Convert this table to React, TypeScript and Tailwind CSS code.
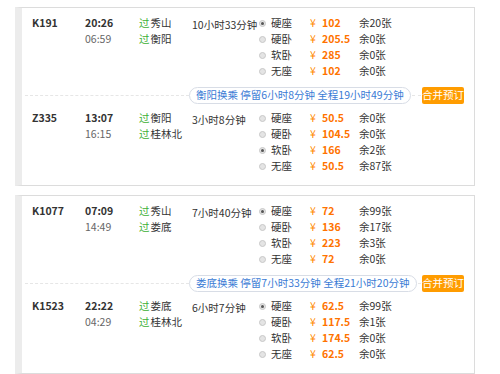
import React from 'react';

type Seat = { name: string; price: string; left: string; checked?: boolean };
type Leg = {
  no: string;
  dep: string;
  arr: string;
  from: string;
  to: string;
  dur: string;
  seats: Seat[];
};
type Trip = { first: Leg; second: Leg; transfer: string };

const trips: Trip[] = [
  {
    transfer: '衡阳换乘 停留6小时8分钟 全程19小时49分钟',
    first: {
      no: 'K191',
      dep: '20:26',
      arr: '06:59',
      from: '秀山',
      to: '衡阳',
      dur: '10小时33分钟',
      seats: [
        { name: '硬座', price: '102', left: '余20张', checked: true },
        { name: '硬卧', price: '205.5', left: '余0张' },
        { name: '软卧', price: '285', left: '余0张' },
        { name: '无座', price: '102', left: '余0张' },
      ],
    },
    second: {
      no: 'Z335',
      dep: '13:07',
      arr: '16:15',
      from: '衡阳',
      to: '桂林北',
      dur: '3小时8分钟',
      seats: [
        { name: '硬座', price: '50.5', left: '余0张' },
        { name: '硬卧', price: '104.5', left: '余0张' },
        { name: '软卧', price: '166', left: '余2张', checked: true },
        { name: '无座', price: '50.5', left: '余87张' },
      ],
    },
  },
  {
    transfer: '娄底换乘 停留7小时33分钟 全程21小时20分钟',
    first: {
      no: 'K1077',
      dep: '07:09',
      arr: '14:49',
      from: '秀山',
      to: '娄底',
      dur: '7小时40分钟',
      seats: [
        { name: '硬座', price: '72', left: '余99张', checked: true },
        { name: '硬卧', price: '136', left: '余17张' },
        { name: '软卧', price: '223', left: '余3张' },
        { name: '无座', price: '72', left: '余0张' },
      ],
    },
    second: {
      no: 'K1523',
      dep: '22:22',
      arr: '04:29',
      from: '娄底',
      to: '桂林北',
      dur: '6小时7分钟',
      seats: [
        { name: '硬座', price: '62.5', left: '余99张', checked: true },
        { name: '硬卧', price: '117.5', left: '余1张' },
        { name: '软卧', price: '174.5', left: '余0张' },
        { name: '无座', price: '62.5', left: '余0张' },
      ],
    },
  },
];

const Radio = ({ checked }: { checked?: boolean }) => (
  <span className="w-[7px] h-[7px] rounded-full border border-[#c8c8c8] bg-[#e4e4e4] flex items-center justify-center">
    {checked && <span className="w-[3px] h-[3px] rounded-full bg-[#555]" />}
  </span>
);

const LegRow = ({ leg }: { leg: Leg }) => (
  <div className="flex text-[10.5px] leading-[16px] text-[#333]">
    <div className="w-[63px] pl-[10px] font-bold">{leg.no}</div>
    <div className="w-[54px]">
      <div className="font-bold">{leg.dep}</div>
      <div className="text-[#666]">{leg.arr}</div>
    </div>
    <div className="w-[53px]">
      <div>
        <span className="text-[#3cb035] mr-[1px]">过</span>
        {leg.from}
      </div>
      <div>
        <span className="text-[#3cb035] mr-[1px]">过</span>
        {leg.to}
      </div>
    </div>
    <div className="w-[67px] pt-[2px] whitespace-nowrap">{leg.dur}</div>
    <div className="flex flex-col">
      {leg.seats.map((s) => (
        <div key={s.name} className="flex items-center h-[16px]">
          <Radio checked={s.checked} />
          <span className="ml-[5px] w-[39px]">{s.name}</span>
          <span className="w-[12px] text-[#ff8a00]">¥</span>
          <span className="w-[37px] font-bold text-[#ff7300]">{s.price}</span>
          <span>{s.left}</span>
        </div>
      ))}
    </div>
  </div>
);

const TripCard = ({ trip }: { trip: Trip }) => (
  <div className="w-[460px] border border-[#dcdcdc] border-l-[7px] border-l-[#ececec] bg-white pt-[7px] pb-[11px]">
    <LegRow leg={trip.first} />
    <div className="flex items-center mt-[8px] mb-[7px] pl-[3px] pr-[10px] h-[16px]">
      <div className="w-[164px] border-t border-dashed border-[#e6e6e6]" />
      <div className="h-[17px] px-[6px] flex items-center rounded-full border border-[#d8dde6] text-[10.5px] text-[#3a7bd5] whitespace-nowrap">
        {trip.transfer}
      </div>
      <div className="flex-1 mx-[1px] border-t border-dashed border-[#e6e6e6]" />
      <div className="h-[17px] w-[42px] flex items-center justify-center rounded-[2px] bg-[#ff9c00] text-white text-[10.5px] whitespace-nowrap">
        合并预订
      </div>
    </div>
    <LegRow leg={trip.second} />
  </div>
);

const App = () => {
  return (
    <div
      className="w-[500px] h-[374px] bg-white overflow-hidden pt-[7px] pl-[15px] flex flex-col gap-[9px]"
      style={{ fontFamily: '"Noto Sans CJK SC", "Liberation Sans", sans-serif' }}
    >
      {trips.map((t) => (
        <TripCard key={t.first.no} trip={t} />
      ))}
    </div>
  );
};

export default App;
